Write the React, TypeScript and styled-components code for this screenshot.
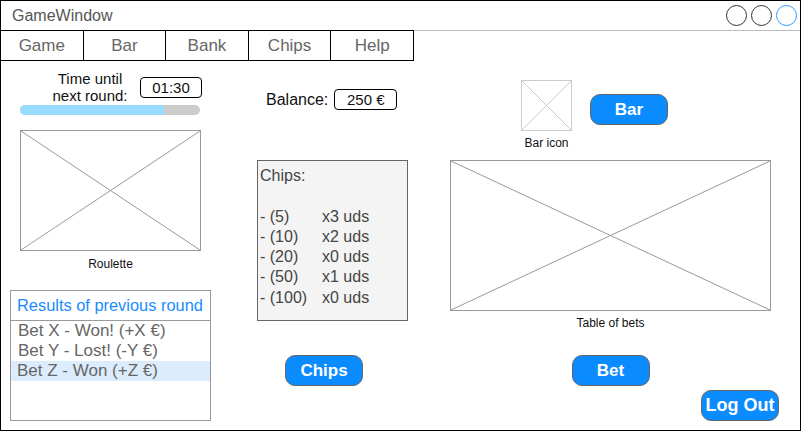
import styled, { createGlobalStyle } from "styled-components"

const GlobalStyle = createGlobalStyle`
  html, body {
    margin: 0;
    padding: 0;
    background: #fff;
  }
  body {
    font-family: "Liberation Sans", Arial, sans-serif;
  }
  * {
    box-sizing: border-box;
  }
`

const Window = styled.div`
  width: 801px;
  height: 431px;
  border: 1px solid #000;
  display: flex;
  flex-direction: column;
  overflow: hidden;
`

const TitleBar = styled.div`
  height: 30px;
  border-bottom: 1px solid #bbb;
  display: flex;
  align-items: center;
  justify-content: space-between;
  padding: 0 3px 0 11px;
`

const Title = styled.div`
  font-size: 16px;
  color: #555;
`

const Controls = styled.div`
  display: flex;
  gap: 4px;
`

const Dot = styled.div<{ $active?: boolean }>`
  width: 21px;
  height: 21px;
  border-radius: 50%;
  border: 1px solid ${p => (p.$active ? "#3399ff" : "#333")};
`

const MenuBar = styled.div`
  width: 413px;
  height: 31px;
  margin-top: -1px;
  border-top: 1px solid #000;
  border-bottom: 1px solid #000;
  display: grid;
  grid-template-columns: repeat(5, 1fr);
`

const MenuItem = styled.div`
  border-right: 1px solid #000;
  display: flex;
  align-items: center;
  justify-content: center;
  font-size: 17px;
  color: #666;
`

const Body = styled.div`
  flex: 1;
  display: flex;
`

const Column = styled.div<{ $width?: number; $left: number }>`
  display: flex;
  flex-direction: column;
  align-items: flex-start;
  margin-left: ${p => p.$left}px;
  ${p => (p.$width ? `width: ${p.$width}px;` : "flex: 1;")}
`

const TimerRow = styled.div`
  margin: 9px 0 0 30px;
  display: flex;
  align-items: center;
`

const TimerLabel = styled.div`
  width: 100px;
  text-align: center;
  font-size: 15px;
  line-height: 17px;
  color: #111;
`

const ValueBox = styled.div<{ $width: number }>`
  width: ${p => p.$width}px;
  height: 21px;
  border: 1px solid #000;
  border-radius: 4px;
  display: flex;
  align-items: center;
  justify-content: center;
  font-size: 15px;
  color: #111;
`

const Progress = styled.div`
  margin: 1px 0 0 10px;
  width: 180px;
  height: 10px;
  border-radius: 5px;
  background: #cccccc;
  overflow: hidden;
`

const ProgressFill = styled.div`
  height: 100%;
  background: #99dcff;
`

const Placeholder = styled.div<{ $w: number; $h: number; $color: string; $top: number; $left?: number }>`
  width: ${p => p.$w}px;
  height: ${p => p.$h}px;
  margin-top: ${p => p.$top}px;
  margin-left: ${p => p.$left ?? 0}px;
  border: 1px solid ${p => p.$color};
  flex-shrink: 0;

  svg {
    display: block;
    width: 100%;
    height: 100%;
  }
`

const Caption = styled.div<{ $width: number; $top: number; $left?: number }>`
  width: ${p => p.$width}px;
  margin-top: ${p => p.$top}px;
  margin-left: ${p => p.$left ?? 0}px;
  text-align: center;
  font-size: 12px;
  line-height: 14px;
  color: #111;
  white-space: nowrap;
`

const Results = styled.div`
  margin-top: 19px;
  width: 201px;
  height: 131px;
  border: 1px solid #999;
`

const ResultsHeader = styled.div`
  height: 30px;
  border-bottom: 1px solid #999;
  display: flex;
  align-items: center;
  padding-left: 6px;
  font-size: 16.4px;
  color: #1a8cff;
  white-space: nowrap;
`

const ResultItem = styled.div<{ $selected?: boolean }>`
  height: 20px;
  line-height: 20px;
  padding-left: ${p => (p.$selected ? 6 : 7)}px;
  font-size: 17px;
  color: #666;
  white-space: nowrap;
  background: ${p => (p.$selected ? "#dcecfc" : "transparent")};
`

const BalanceRow = styled.div`
  margin: 28px 0 0 9px;
  display: flex;
  align-items: center;
  gap: 6px;
`

const BalanceLabel = styled.div`
  font-size: 16px;
  color: #111;
`

const ChipsBox = styled.div`
  margin-top: 50px;
  width: 151px;
  height: 161px;
  border: 1px solid #666;
  background: #f4f4f4;
  padding: 5px 0 0 2px;
  font-size: 16px;
  line-height: 20.3px;
  color: #444;
`

const ChipsHeading = styled.div`
  margin-bottom: 20.3px;
`

const ChipRow = styled.div`
  display: grid;
  grid-template-columns: 62px 1fr;
`

const Button = styled.button<{ $top: number; $left?: number; $right?: number; $size?: number }>`
  width: 78px;
  height: 31px;
  margin-top: ${p => p.$top}px;
  margin-left: ${p => p.$left ?? 0}px;
  margin-right: ${p => p.$right ?? 0}px;
  border: 1px solid #666;
  border-radius: 10px;
  background: #0a8cff;
  color: #fff;
  font-family: "Liberation Sans", Arial, sans-serif;
  font-weight: bold;
  font-size: ${p => p.$size ?? 17}px;
  padding: 0;
  flex-shrink: 0;
`

const TopRow = styled.div`
  margin: 19px 0 0 71px;
  display: flex;
  align-items: flex-start;
`

const IconGroup = styled.div`
  display: flex;
  flex-direction: column;
  align-items: center;
  width: 51px;
`

const TableGroup = styled.div`
  width: 321px;
  display: flex;
  flex-direction: column;
  align-items: center;
  margin-top: 10px;
`

const LogOut = styled(Button)`
  align-self: flex-end;
`

const Cross = ({ color }: { color: string }) => (
  <svg viewBox="0 0 100 100" preserveAspectRatio="none">
    <line x1="0" y1="0" x2="100" y2="100" stroke={color} strokeWidth="1" vectorEffect="non-scaling-stroke" />
    <line x1="100" y1="0" x2="0" y2="100" stroke={color} strokeWidth="1" vectorEffect="non-scaling-stroke" />
  </svg>
)

const menu = ["Game", "Bar", "Bank", "Chips", "Help"]

const results = [
  { text: "Bet X - Won! (+X €)" },
  { text: "Bet Y - Lost! (-Y €)" },
  { text: "Bet Z - Won (+Z €)", selected: true },
]

const chips = [
  ["- (5)", "x3 uds"],
  ["- (10)", "x2 uds"],
  ["- (20)", "x0 uds"],
  ["- (50)", "x1 uds"],
  ["- (100)", "x0 uds"],
]

const progress = 0.8

const App = () => (
  <>
    <GlobalStyle />
    <Window>
      <TitleBar>
        <Title>GameWindow</Title>
        <Controls>
          <Dot />
          <Dot />
          <Dot $active />
        </Controls>
      </TitleBar>
      <MenuBar>
        {menu.map(m => (
          <MenuItem key={m}>{m}</MenuItem>
        ))}
      </MenuBar>
      <Body>
        <Column $width={201} $left={9}>
          <TimerRow>
            <TimerLabel>
              Time until
              <br />
              next round:
            </TimerLabel>
            <ValueBox $width={62}>01:30</ValueBox>
          </TimerRow>
          <Progress>
            <ProgressFill style={{ width: `${progress * 100}%` }} />
          </Progress>
          <Placeholder $w={181} $h={121} $color="#999" $top={15} $left={10}>
            <Cross color="#999" />
          </Placeholder>
          <Caption $width={181} $top={6} $left={10}>Roulette</Caption>
          <Results>
            <ResultsHeader>Results of previous round</ResultsHeader>
            {results.map(r => (
              <ResultItem key={r.text} $selected={r.selected}>
                {r.text}
              </ResultItem>
            ))}
          </Results>
        </Column>

        <Column $width={151} $left={46}>
          <BalanceRow>
            <BalanceLabel>Balance:</BalanceLabel>
            <ValueBox $width={63}>250 €</ValueBox>
          </BalanceRow>
          <ChipsBox>
            <ChipsHeading>Chips:</ChipsHeading>
            {chips.map(([value, count]) => (
              <ChipRow key={value}>
                <span>{value}</span>
                <span>{count}</span>
              </ChipRow>
            ))}
          </ChipsBox>
          <Button $top={34} $left={28}>Chips</Button>
        </Column>

        <Column $left={42}>
          <TopRow>
            <IconGroup>
              <Placeholder $w={51} $h={51} $color="#ccc" $top={0}>
                <Cross color="#ccc" />
              </Placeholder>
              <Caption $width={60} $top={5}>Bar icon</Caption>
            </IconGroup>
            <Button $top={14} $left={18}>Bar</Button>
          </TopRow>
          <TableGroup>
            <Placeholder $w={321} $h={151} $color="#999" $top={0}>
              <Cross color="#999" />
            </Placeholder>
            <Caption $width={321} $top={5}>Table of bets</Caption>
            <Button $top={25}>Bet</Button>
          </TableGroup>
          <LogOut $top={4} $right={21} $size={18}>Log Out</LogOut>
        </Column>
      </Body>
    </Window>
  </>
)

export default App
